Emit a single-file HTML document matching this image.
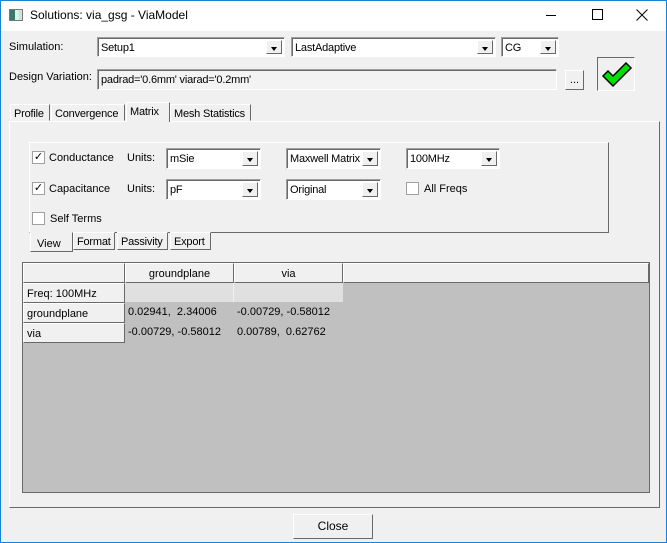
<!DOCTYPE html>
<html><head><style>
*{box-sizing:border-box;margin:0;padding:0}
body{width:667px;height:543px;background:#f0f0f0;font-family:"Liberation Sans",sans-serif;font-size:11px;color:#000;position:relative;overflow:hidden}
.a{position:absolute}
.win{left:0;top:0;width:667px;height:543px;border:1px solid #1783d7;border-top:none}
.title{left:0;top:0;width:667px;height:31px;background:#fff;border:1px solid #1783d7;border-bottom:none}
.combo{position:absolute;background:#fff;border:1px solid;border-color:#a0a0a0 #fff #fff #a0a0a0;box-shadow:inset 1px 1px 0 #696969;padding:4px 0 0 3px;white-space:nowrap;overflow:hidden;letter-spacing:-0.2px}
.btn{position:absolute;width:16px;background:#f0f0f0;border:1px solid;border-color:#fff #696969 #696969 #fff;top:2px;right:2px;bottom:2px}
.btn:after{content:"";position:absolute;left:4px;top:6px;border-left:3.5px solid transparent;border-right:3.5px solid transparent;border-top:4px solid #000}
.cb{position:absolute;width:13px;height:13px;background:#fff;border:1px solid #a0a0a0;font-size:11px;line-height:11px;text-align:center}
.tab{position:absolute;border:1px solid;border-color:#fff #696969 #f0f0f0 #fff;padding:3px 3px;height:18px;font-size:11px;white-space:nowrap;letter-spacing:-0.2px}
.raised{border:1px solid;border-color:#fff #696969 #696969 #fff}
.cell{position:absolute;background:#f0f0f0;border:1px solid;border-color:#fff #696969 #696969 #fff;padding:4px 3px;white-space:nowrap}
.v{position:absolute;white-space:nowrap}
</style></head><body>
<div class="a win"></div>
<div class="a title"></div>
<div class="a" style="left:9px;top:9px;width:14px;height:12px;border:1px solid #777;background:linear-gradient(90deg,#3a7a6a 0 40%,#cfe 40% 70%,#ddd 70%)"></div>
<div class="a" style="left:30px;top:8px;font-size:12px">Solutions: via_gsg - ViaModel</div>
<div class="a" style="left:546px;top:15px;width:10px;height:1px;background:#000"></div>
<div class="a" style="left:592px;top:9px;width:11px;height:11px;border:1px solid #000"></div>
<svg class="a" style="left:636px;top:9px" width="12" height="12"><path d="M0.5 0.5L11.5 11.5M11.5 0.5L0.5 11.5" stroke="#000" stroke-width="1"/></svg>

<div class="a" style="left:9px;top:41px">Simulation:</div>
<div class="combo" style="left:97px;top:37px;width:188px;height:20px">Setup1<div class="btn"></div></div>
<div class="combo" style="left:291px;top:37px;width:205px;height:20px">LastAdaptive<div class="btn"></div></div>
<div class="combo" style="left:501px;top:37px;width:58px;height:20px">CG<div class="btn"></div></div>
<div class="a" style="left:9px;top:71px">Design Variation:</div>
<div class="combo" style="left:97px;top:69px;width:460px;height:21px;background:#f3f3f3;padding-top:4px">padrad='0.6mm' viarad='0.2mm'</div>
<div class="a raised" style="left:565px;top:70px;width:19px;height:20px;text-align:center;line-height:18px">...</div>
<div class="a" style="left:597px;top:57px;width:38px;height:34px;border:1px solid;border-color:#696969 #fff #fff #696969">
<svg width="36" height="32" viewBox="0 0 36 32"><path d="M5 18 L10 13 L15 18 L28 5 L33 10 L15 28 Z" fill="#00e000" stroke="#000" stroke-width="1.5"/></svg></div>

<div class="a" style="left:9px;top:121px;width:651px;height:387px;border:1px solid;border-color:#fff #696969 #696969 #fff"></div>
<div class="tab" style="left:10px;top:104px;width:40px;height:17px">Profile</div>
<div class="tab" style="left:51px;top:104px;width:74px;height:17px">Convergence</div>
<div class="tab" style="left:126px;top:102px;width:44px;height:20px;background:#f0f0f0;border-bottom:none">Matrix</div>
<div class="tab" style="left:170px;top:104px;width:81px;height:17px">Mesh Statistics</div>

<div class="a" style="left:29px;top:142px;width:580px;height:91px;border:1px solid;border-color:#fff #696969 #696969 #fff"></div>
<div class="cb" style="left:32px;top:151px">✓</div><div class="v" style="left:49px;top:152px">Conductance</div>
<div class="v" style="left:127px;top:152px">Units:</div>
<div class="combo" style="left:166px;top:148px;width:95px;height:21px">mSie<div class="btn"></div></div>
<div class="combo" style="left:286px;top:148px;width:95px;height:21px">Maxwell Matrix<div class="btn"></div></div>
<div class="combo" style="left:406px;top:148px;width:94px;height:21px">100MHz<div class="btn"></div></div>
<div class="cb" style="left:32px;top:182px">✓</div><div class="v" style="left:49px;top:183px">Capacitance</div>
<div class="v" style="left:127px;top:183px">Units:</div>
<div class="combo" style="left:166px;top:179px;width:95px;height:21px">pF<div class="btn"></div></div>
<div class="combo" style="left:286px;top:179px;width:95px;height:21px">Original<div class="btn"></div></div>
<div class="cb" style="left:406px;top:182px"></div><div class="v" style="left:424px;top:183px">All Freqs</div>
<div class="cb" style="left:32px;top:212px"></div><div class="v" style="left:50px;top:213px">Self Terms</div>

<div class="a" style="left:30px;top:232px;width:43px;height:20px;background:#f0f0f0;border:1px solid;border-color:#f0f0f0 #696969 #696969 #fff;padding:5px 0 0 6px">View</div>
<div class="tab" style="left:73px;top:232px;width:42px;height:18px;border-color:#fff #696969 #696969 #fff">Format</div>
<div class="tab" style="left:117px;top:232px;width:51px;height:18px;border-color:#fff #696969 #696969 #fff">Passivity</div>
<div class="tab" style="left:170px;top:232px;width:41px;height:18px;border-color:#fff #696969 #696969 #fff">Export</div>

<div class="a" style="left:22px;top:262px;width:628px;height:231px;background:#c0c0c0;border:1px solid #696969"></div>
<div class="cell" style="left:23px;top:263px;width:102px;height:20px"></div>
<div class="cell" style="left:125px;top:263px;width:109px;height:20px;text-align:center">groundplane</div>
<div class="cell" style="left:234px;top:263px;width:109px;height:20px;text-align:center">via</div>
<div class="cell" style="left:343px;top:263px;width:306px;height:20px"></div>
<div class="cell" style="left:23px;top:283px;width:102px;height:20px">Freq: 100MHz</div>
<div class="a" style="left:125px;top:283px;width:218px;height:19px;background:#e0e0e0"></div>
<div class="a" style="left:233px;top:283px;width:1px;height:19px;background:#f0f0f0"></div>
<div class="cell" style="left:23px;top:303px;width:102px;height:20px">groundplane</div>
<div class="cell" style="left:23px;top:323px;width:102px;height:20px">via</div>
<div class="v" style="left:128px;top:306px">0.02941,&nbsp; 2.34006</div>
<div class="v" style="left:237px;top:306px">-0.00729, -0.58012</div>
<div class="v" style="left:128px;top:326px">-0.00729, -0.58012</div>
<div class="v" style="left:237px;top:326px">0.00789,&nbsp; 0.62762</div>

<div class="a raised" style="left:293px;top:514px;width:80px;height:25px;text-align:center;line-height:22px;font-size:12px;border-color:#fff #696969 #696969 #fff">Close</div>
</body></html>
